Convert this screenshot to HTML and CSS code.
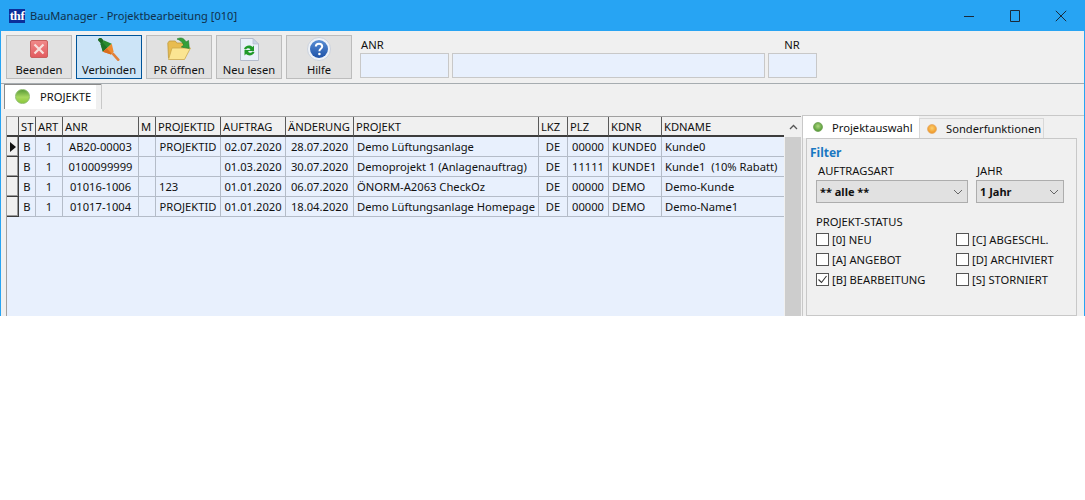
FILE: index.html
```html
<!DOCTYPE html>
<html lang="de">
<head>
<meta charset="utf-8">
<title>BauManager</title>
<link rel="stylesheet" href="styles.css">
</head>
<body>
<div class="window">
  <header class="titlebar">
    <span class="logo">thf</span>
    <span class="title">BauManager - Projektbearbeitung [010]</span>
    <div class="winbtns">
      <svg width="12" height="12" viewBox="0 0 12 12"><path d="M1 6.500h10" stroke="#1a2a3a" fill="none"/></svg>
      <svg width="12" height="12" viewBox="0 0 12 12"><path d="M1.500 .5h9v11h-9z" stroke="#1a2a3a" fill="none"/></svg>
      <svg width="12" height="12" viewBox="0 0 12 12"><path d="M.8.800l10.400 10.400M11.200.800L.8 11.200" stroke="#1a2a3a" fill="none"/></svg>
    </div>
  </header>
  <div class="toolbar">
    <button class="tool">
      <span class="ico"><svg width="18" height="18" viewBox="0 0 18 18"><defs><linearGradient id="rd" x1="0" y1="0" x2="0" y2="1"><stop offset="0" stop-color="#f08a8a"/><stop offset="1" stop-color="#e25a5e"/></linearGradient></defs><rect x=".5" y=".5" width="17" height="17" rx="1.500" fill="url(#rd)" stroke="#c8605e"/><path d="M4.500 4.500l9 9M13.500 4.500l-9 9" stroke="#f8e0dc" stroke-width="2.200"/></svg></span>
      <span class="lbl">Beenden</span>
    </button>
    <button class="tool active">
      <span class="ico"><svg width="22" height="23" viewBox="0 0 22 23"><g transform="translate(11 11.500) rotate(-42)"><rect x="-2" y="-15" width="4" height="5.500" rx="1" fill="#1c6a22"/><path d="M-2.500 -10H2.500L6 -2.500H-6z" fill="#2a8c2e"/><path d="M-2.500 -10H0V-2.500H-6z" fill="#1e7426"/><path d="M-6 -2.500H6L1.800 5H-1.800z" fill="#f08a2e"/><path d="M-6 -2.500H-.8V5H-1.800z" fill="#d86e20"/><rect x="-1.300" y="5" width="2.600" height="10" rx="1" fill="#e0803a"/></g></svg></span>
      <span class="lbl">Verbinden</span>
    </button>
    <button class="tool">
      <span class="ico"><svg width="24" height="24" viewBox="0 0 24 24"><path d="M1.500 21L.8 6l1.500-2h6l1.500 2h7v8z" fill="#e8bc50" stroke="#c09a3c" stroke-width=".8"/><path d="M1.500 22.500L5 11h18.500l-6 11.500z" fill="#fbe592" stroke="#cda94c" stroke-width=".8"/><path d="M10 2c4-2 7-1 9 3l2.500-1.500.8 8-8-1.500 2.500-2c-1.500-3-3.800-5-6.800-6z" fill="#35a03a" stroke="#1e7a28" stroke-width=".6"/></svg></span>
      <span class="lbl">PR öffnen</span>
    </button>
    <button class="tool">
      <span class="ico"><svg width="19" height="23" viewBox="0 0 19 23"><path d="M.5.500h12.500l5.500 5.500v16.500H.5z" fill="#e9f0fa" stroke="#b4bccb"/><path d="M13 .5v5.500h5.500z" fill="#c8d4e6" stroke="#b4bccb" stroke-width=".7"/><path d="M4 11c1-3.500 6-4.500 8.500-2l1.500-1.500v5.500H8.500l2-1.800c-1.500-1.500-3.500-1.200-4.500.3z" fill="#1f9a2a"/><path d="M14.500 14c-1 3.500-6 4.500-8.500 2l-1.500 1.500v-5.500H10l-2 1.800c1.500 1.500 3.500 1.200 4.500-.3z" fill="#1f9a2a"/></svg></span>
      <span class="lbl">Neu lesen</span>
    </button>
    <button class="tool">
      <span class="ico"><svg width="24" height="24" viewBox="0 0 24 24"><defs><linearGradient id="bl" x1="0" y1="0" x2="0" y2="1"><stop offset="0" stop-color="#5a8ed4"/><stop offset="1" stop-color="#1d52a8"/></linearGradient></defs><circle cx="12" cy="12" r="11.500" fill="#eef2f8" stroke="#c4ccd8" stroke-width=".8"/><circle cx="12" cy="12" r="9" fill="url(#bl)"/><path d="M8.800 9.500c0-1.800 1.400-2.800 3.200-2.800s3.200 1 3.200 2.800c0 2.300-2.800 2.300-2.800 4.700" fill="none" stroke="#fff" stroke-width="2"/><circle cx="12.400" cy="17" r="1.300" fill="#fff"/></svg></span>
      <span class="lbl">Hilfe</span>
    </button>
    <div class="fields">
      <div class="field f-anr"><label>ANR</label><div class="box"></div></div>
      <div class="field f-name"><label>&nbsp;</label><div class="box"></div></div>
      <div class="field f-nr"><label>NR</label><div class="box"></div></div>
    </div>
  </div>
  <div class="pagetabs">
    <div class="pagetab"><i class="led led-big"></i><span>PROJEKTE</span></div>
  </div>
  <main class="content">
    <div class="gridwrap">
      <table class="grid">
        <colgroup>
          <col class="c0"><col class="c1"><col class="c2"><col class="c3"><col class="c4"><col class="c5"><col class="c6"><col class="c7"><col class="c8"><col class="c9"><col class="c10"><col class="c11"><col class="c12">
        </colgroup>
        <thead>
          <tr><th></th><th>ST</th><th>ART</th><th>ANR</th><th>M</th><th>PROJEKTID</th><th>AUFTRAG</th><th>ÄNDERUNG</th><th>PROJEKT</th><th>LKZ</th><th>PLZ</th><th>KDNR</th><th>KDNAME</th></tr>
        </thead>
        <tbody>
          <tr><th class="ind"><i class="arrow"></i></th><td class="ctr">B</td><td class="ctr">1</td><td class="ctr">AB20-00003</td><td></td><td class="ctr">PROJEKTID</td><td class="ctr">02.07.2020</td><td class="ctr">28.07.2020</td><td>Demo Lüftungsanlage</td><td class="ctr">DE</td><td class="ctr">00000</td><td>KUNDE0</td><td>Kunde0</td></tr>
          <tr><th class="ind"></th><td class="ctr">B</td><td class="ctr">1</td><td class="ctr">0100099999</td><td></td><td></td><td class="ctr">01.03.2020</td><td class="ctr">30.07.2020</td><td>Demoprojekt 1 (Anlagenauftrag)</td><td class="ctr">DE</td><td class="ctr">11111</td><td>KUNDE1</td><td class="pre">Kunde1  (10% Rabatt)</td></tr>
          <tr><th class="ind"></th><td class="ctr">B</td><td class="ctr">1</td><td class="ctr">01016-1006</td><td></td><td>123</td><td class="ctr">01.01.2020</td><td class="ctr">06.07.2020</td><td>ÖNORM-A2063 CheckOz</td><td class="ctr">DE</td><td class="ctr">00000</td><td>DEMO</td><td>Demo-Kunde</td></tr>
          <tr><th class="ind"></th><td class="ctr">B</td><td class="ctr">1</td><td class="ctr">01017-1004</td><td></td><td class="ctr">PROJEKTID</td><td class="ctr">01.01.2020</td><td class="ctr">18.04.2020</td><td>Demo Lüftungsanlage Homepage</td><td class="ctr">DE</td><td class="ctr">00000</td><td>DEMO</td><td>Demo-Name1</td></tr>
        </tbody>
      </table>
      <div class="scrollbar">
        <div class="scrollup"><svg width="9" height="6" viewBox="0 0 9 6"><path d="M1 5l3.500-3.500L8 5" fill="none" stroke="#555" stroke-width="1.300"/></svg></div>
        <div class="thumb"></div>
      </div>
    </div>
    <aside class="side">
      <div class="sidetabs">
        <div class="sidetab on"><i class="led"></i><span>Projektauswahl</span></div>
        <div class="sidetab"><i class="led orange"></i><span>Sonderfunktionen</span></div>
      </div>
      <div class="panel">
        <div class="filter">Filter</div>
        <div class="selects">
          <div class="sel-a"><div class="lab">AUFTRAGSART</div><div class="select"><b>** alle **</b><svg width="10" height="6" viewBox="0 0 10 6"><path d="M1 1l4 4 4-4" fill="none" stroke="#666"/></svg></div></div>
          <div class="sel-j"><div class="lab">JAHR</div><div class="select"><b>1 Jahr</b><svg width="10" height="6" viewBox="0 0 10 6"><path d="M1 1l4 4 4-4" fill="none" stroke="#666"/></svg></div></div>
        </div>
        <div class="status-label">PROJEKT-STATUS</div>
        <div class="checks">
          <div class="chk"><i class="cb"></i>[0] NEU</div>
          <div class="chk"><i class="cb"></i>[C] ABGESCHL.</div>
          <div class="chk"><i class="cb"></i>[A] ANGEBOT</div>
          <div class="chk"><i class="cb"></i>[D] ARCHIVIERT</div>
          <div class="chk"><i class="cb"><svg width="11" height="11" viewBox="0 0 11 11"><path d="M1.500 5.500l3 3 5-6.500" fill="none" stroke="#333" stroke-width="1.100"/></svg></i>[B] BEARBEITUNG</div>
          <div class="chk"><i class="cb"></i>[S] STORNIERT</div>
        </div>
      </div>
    </aside>
  </main>
</div>
</body>
</html>
```

FILE: styles.css
```css
* { box-sizing: border-box; }
html, body { margin: 0; padding: 0; background: #fff; }
body { font-family: "Noto Sans", "Liberation Sans", sans-serif; font-size: 11.2px; color: #111; }
.window { width: 1085px; height: 316px; overflow: hidden; background: #f0f0f0; border-left: 1px solid #27a4f3; border-right: 1px solid #27a4f3; display: flex; flex-direction: column; }
.titlebar { height: 31px; flex: none; margin: 0 -1px; background: #27a4f3; display: flex; align-items: center; padding-left: 9px; color: #10304c; font-size: 11.1px; }
.logo { width: 16px; height: 14px; background: #0c2f9a; color: #fff; font: bold 13px/13px "Liberation Serif", serif; text-align: center; letter-spacing: -.4px; margin-right: 5px; }
.title { flex: 1; }
.winbtns { display: flex; gap: 34px; padding-right: 18px; }
.toolbar { height: 53px; flex: none; display: flex; gap: 4px; padding: 4px 0 0 5px; border-bottom: 1px solid #a6acb0; }
.tool { width: 66px; height: 44px; padding: 0; background: #e1e1e1; border: 1px solid #bcbcbc; font: inherit; color: #111; display: flex; flex-direction: column; align-items: center; justify-content: flex-start; }
.ico { height: 26px; display: flex; align-items: center; justify-content: center; flex: none; }
.ico svg { display: block; }
.lbl { line-height: 15px; }
.tool.active { background: #cce4f7; border-color: #005499; }
.fields { display: flex; gap: 3px; margin-left: 4px; margin-top: 2px; }
.field label { display: block; height: 16px; line-height: 15px; padding-left: 1px; }
.box { height: 25px; background: #e8f0fd; border: 1px solid #c8c8c8; }
.f-anr { width: 89px; }
.f-name { width: 313px; }
.f-nr { width: 49px; text-align: center; }
.f-nr label { padding: 0 1px 0 0; }
.pagetabs { height: 25px; flex: none; display: flex; padding: 0 0 0 3px; }
.pagetab { width: 98px; height: 25px; background: linear-gradient(90deg, #fff 92px, #f0f0f0 92px); border-right: 1px solid #c8c8c8; box-shadow: inset 1px 1px 0 #8a8a8a; display: flex; align-items: center; padding-left: 11px; gap: 10px; }
.led { width: 10px; height: 10px; border-radius: 50%; flex: none; display: block; background: radial-gradient(circle at 50% 40%, #b0d880, #5ca03c 70%); border: 1px solid #7aa860; }
.led-big { width: 15px; height: 15px; background: linear-gradient(#5a9c38, #a8d860 55%, #8cc83c); border-color: #8cbc6c; }
.led.orange { background: radial-gradient(circle at 50% 40%, #fcd070, #f09c2c 70%); border-color: #e8b070; }
.content { flex: 1; display: flex; padding: 7px 0 0 5px; min-height: 0; }
.gridwrap { width: 795px; flex: none; display: flex; background: #e8f0fd; border-top: 1px solid #a0a0a0; border-left: 1px solid #a0a0a0; }
.grid { width: 777px; height: 0; table-layout: fixed; border-collapse: separate; border-spacing: 0; }
.c0 { width: 12px; } .c1 { width: 17px; } .c2 { width: 27px; } .c3 { width: 76px; } .c4 { width: 17px; } .c5 { width: 65px; } .c6 { width: 65px; } .c7 { width: 68px; } .c8 { width: 185px; } .c9 { width: 29px; } .c10 { width: 41px; } .c11 { width: 53px; } .c12 { width: 122px; }
.grid thead th { height: 20px; background: #f0f0f0; font-weight: 400; text-align: left; padding: 0 0 0 2px; border-right: 1px solid #5a5a5a; border-bottom: 2px solid #3c3c3c; white-space: nowrap; overflow: hidden; }
.grid thead th:last-child { border-right: 0; }
.grid td { height: 20px; padding: 0 3px 1px; white-space: nowrap; overflow: hidden; border-right: 1px solid #b4bcc8; border-bottom: 1px solid #b4bcc8; }
.grid td:last-child { border-right: 0; }
.grid td.ctr { text-align: center; }
.grid td.pre { white-space: pre; }
.grid .ind { height: 20px; padding: 0; background: #f0f0f0; border-right: 1px solid #3c3c3c; border-bottom: 1px solid #3c3c3c; box-shadow: inset -1px -1px 0 #999; }
.arrow { display: block; width: 0; height: 0; margin-left: 3px; border-left: 6px solid #111; border-top: 5px solid transparent; border-bottom: 5px solid transparent; }
.scrollbar { width: 17px; flex: none; background: #f0f0f0; display: flex; flex-direction: column; align-items: flex-end; }
.scrollup { height: 20px; width: 16px; display: flex; align-items: center; justify-content: center; }
.thumb { flex: 1; background: #cdcdcd; width: 16px; }
.side { flex: 1; margin-left: 1px; margin-top: -1px; border-left: 1px solid #c8c8c8; border-top: 1px solid #c8c8c8; padding-left: 3px; }
.sidetabs { display: flex; height: 22px; margin-left: -3px; }
.sidetab { display: flex; align-items: center; background: #f0f0f0; border: 1px solid #d8d8d8; border-bottom: 0; margin-top: 2px; padding: 0 0 0 7px; gap: 9px; width: 125px; }
.sidetab.on { background: #fff; border: 0; margin-top: 0; width: 116px; padding-left: 10px; }
.panel { width: 271px; height: 178px; border: 1px solid #c8c8c8; padding: 5px 0 0 3px; }
.filter { color: #1a78c2; font-weight: 700; font-size: 12px; line-height: 17px; }
.selects { display: flex; padding-left: 8px; gap: 8px; }
.lab { line-height: 15px; margin-top: 2px; padding-left: 1px; }
.sel-a { width: 152px; margin-left: -2px; }
.sel-a .lab { padding-left: 2px; }
.sel-j { width: 88px; }
.select { height: 23px; margin-top: 2px; background: #e1e1e1; border: 1px solid #adadad; display: flex; align-items: center; justify-content: space-between; padding: 0 4px 0 3px; font-size: 11px; }
.select b { font-weight: 700; }
.status-label { padding-left: 6px; margin-top: 11px; line-height: 15px; }
.checks { display: grid; grid-template-columns: 140px 1fr; grid-auto-rows: 20px; padding-left: 6px; }
.chk { display: flex; align-items: center; gap: 3px; white-space: nowrap; }
.cb { width: 13px; height: 13px; background: #fff; border: 1px solid #555; display: block; flex: none; }
.cb svg { display: block; }
```
